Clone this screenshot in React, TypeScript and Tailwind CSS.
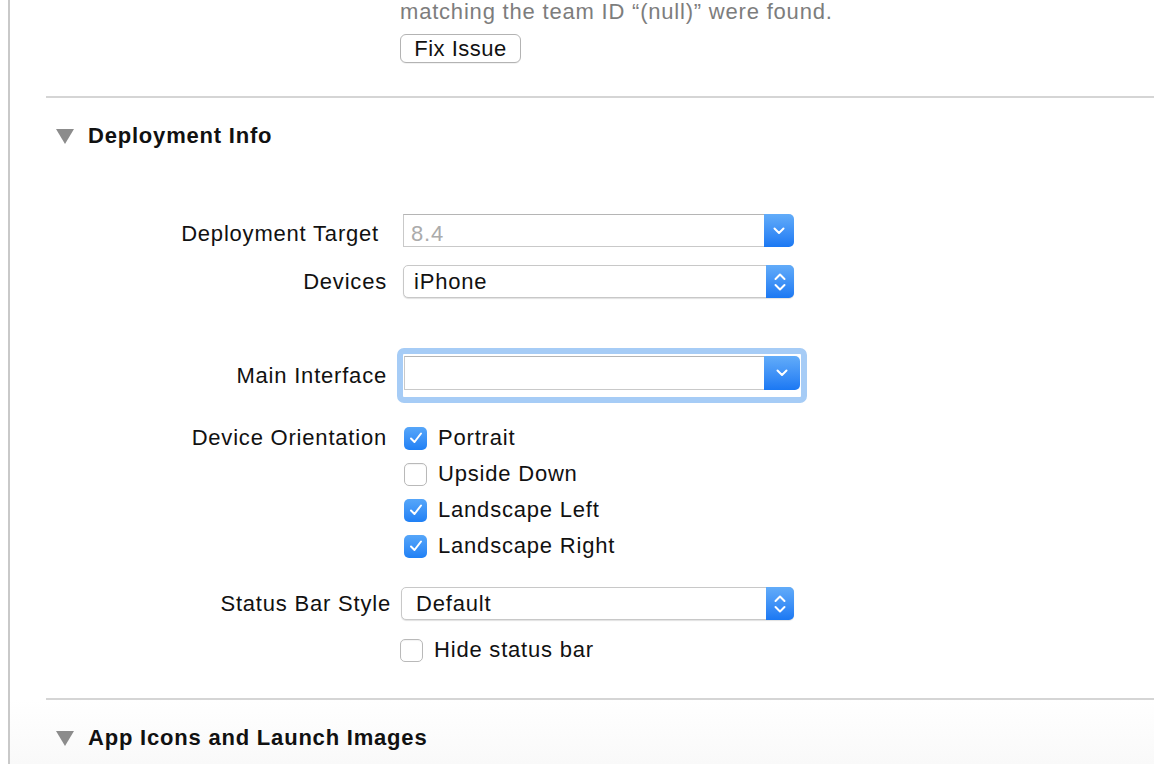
import React from "react";

const Tri = () => (
  <svg width="18" height="15" viewBox="0 0 18 15" className="shrink-0">
    <polygon points="0,0 18,0 9,15" fill="#8c8c8c" />
  </svg>
);

const ChevDown = () => (
  <svg width="12" height="8" viewBox="0 0 12 8">
    <polyline points="1.5,1.5 6,6 10.5,1.5" fill="none" stroke="white" strokeWidth="2" strokeLinecap="round" strokeLinejoin="round" />
  </svg>
);

const ChevUpDown = () => (
  <svg width="12" height="20" viewBox="0 0 12 20">
    <polyline points="1.5,7 6,2.5 10.5,7" fill="none" stroke="white" strokeWidth="2" strokeLinecap="round" strokeLinejoin="round" />
    <polyline points="1.5,13 6,17.5 10.5,13" fill="none" stroke="white" strokeWidth="2" strokeLinecap="round" strokeLinejoin="round" />
  </svg>
);

const Combo = ({ text, gray }: { text: string; gray?: boolean }) => (
  <div className="flex h-[33px] w-[391px] items-stretch">
    <div className="flex flex-1 items-center border border-r-0 border-[#c9c9c9] border-t-[#b5b5b5] bg-white pl-[7px] pt-[6px]">
      <span className={gray ? "text-[#ababab]" : "text-[#111]"}>{text}</span>
    </div>
    <div className="flex w-[30px] items-center justify-center rounded-r-[5px] bg-gradient-to-b from-[#62acf9] to-[#1a78f3]">
      <ChevDown />
    </div>
  </div>
);

const Popup = ({ text, w, pl }: { text: string; w: string; pl: string }) => (
  <div className={`flex h-[33px] ${w} items-stretch rounded-[5px] border border-[#c8c8c8] bg-white shadow-[0_1px_1px_rgba(0,0,0,0.12)]`}>
    <div className={`flex flex-1 items-center ${pl}`}>
      <span className="text-[#111]">{text}</span>
    </div>
    <div className="-my-px -mr-px flex w-[28px] items-center justify-center rounded-r-[5px] bg-gradient-to-b from-[#62acf9] to-[#1a78f3]">
      <ChevUpDown />
    </div>
  </div>
);

const Check = ({ on }: { on?: boolean }) =>
  on ? (
    <div className="flex h-[23px] w-[23px] items-center justify-center rounded-[5px] bg-gradient-to-b from-[#56a6f9] to-[#1f80f5]">
      <svg width="14" height="12" viewBox="0 0 14 12">
        <polyline points="2,6.5 5.5,10 12,1.5" fill="none" stroke="white" strokeWidth="2" strokeLinecap="round" strokeLinejoin="round" />
      </svg>
    </div>
  ) : (
    <div className="h-[23px] w-[23px] rounded-[5px] border border-[#b9b9b9] bg-white shadow-[inset_0_1px_1px_rgba(0,0,0,0.05)]" />
  );

export default function App() {
  return (
    <div
      className="relative flex h-[764px] w-[1154px] overflow-hidden bg-white text-[22px] tracking-[0.8px] text-[#111]"
      style={{ fontFamily: '"Liberation Sans", Arial, sans-serif' }}
    >
      <div className="w-[8px] shrink-0" />
      <div className="w-[2px] shrink-0 bg-[#c9c9c9]" />
      <div className="flex flex-1 flex-col">
        {/* top error text */}
        <div className="ml-[390px] h-[23px] leading-[24px] whitespace-nowrap text-[#7d7d7d]">
          matching the team ID “(null)” were found.
        </div>
        <div className="ml-[390px] mt-[11px] flex h-[29px] w-[121px] items-center justify-center rounded-[6px] border border-[#b3b3b3] bg-white pt-[1px] leading-none tracking-[0.5px] shadow-[0_1px_0_rgba(0,0,0,0.05)]">
          Fix Issue
        </div>

        <div className="ml-[36px] mt-[33px] h-[2px] bg-[#d5d5d5]" />

        {/* Deployment Info header */}
        <div className="ml-[46px] mt-[26px] flex h-[24px] items-center gap-[14px]">
          <Tri />
          <span className="font-bold leading-[24px] tracking-[0.8px]">Deployment Info</span>
        </div>

        {/* Deployment Target */}
        <div className="mt-[66px] flex h-[33px] items-center">
          <div className="w-[377px] pr-[8px] pt-[7px] text-right leading-[24px]">Deployment Target</div>
          <div className="ml-[16px]">
            <Combo text="8.4" gray />
          </div>
        </div>

        {/* Devices */}
        <div className="mt-[18px] flex h-[33px] items-center">
          <div className="w-[377px] pt-[1px] text-right leading-[24px]">Devices</div>
          <div className="ml-[16px]">
            <Popup text="iPhone" w="w-[391px]" pl="pl-[10px]" />
          </div>
        </div>

        {/* Main Interface */}
        <div className="mt-[50px] flex h-[55px] items-center">
          <div className="w-[377px] pt-[1px] text-right leading-[24px]">Main Interface</div>
          <div className="ml-[10px] h-[55px] w-[410px] rounded-[7px] border-[6px] border-[#a6ccf6] bg-white pl-[1px] pt-[2px]">
            <div className="flex h-[34px] w-[396px] items-stretch">
              <div className="flex-1 border border-r-0 border-[#c9c9c9] border-t-[#b5b5b5] bg-white" />
              <div className="flex w-[36px] items-center justify-center rounded-r-[5px] bg-gradient-to-b from-[#62acf9] to-[#1a78f3]">
                <ChevDown />
              </div>
            </div>
          </div>
        </div>

        {/* Device Orientation */}
        <div className="mt-[17px] flex">
          <div className="flex h-[36px] w-[377px] items-center justify-end leading-[24px]">Device Orientation</div>
          <div className="ml-[17px] flex flex-col">
            {[
              ["Portrait", true],
              ["Upside Down", false],
              ["Landscape Left", true],
              ["Landscape Right", true],
            ].map(([t, on]) => (
              <div key={t as string} className="flex h-[36px] items-center gap-[11px]">
                <Check on={on as boolean} />
                <span className="leading-[24px]">{t as string}</span>
              </div>
            ))}
          </div>
        </div>

        {/* Status Bar Style */}
        <div className="mt-[23px] flex h-[33px] items-center">
          <div className="w-[381px] whitespace-nowrap text-right leading-[24px]">Status Bar Style</div>
          <div className="ml-[10px]">
            <Popup text="Default" w="w-[393px]" pl="pl-[14px]" />
          </div>
        </div>

        {/* Hide status bar */}
        <div className="ml-[390px] mt-[18px] flex h-[24px] items-center gap-[11px]">
          <Check />
          <span className="leading-[24px]">Hide status bar</span>
        </div>

        <div className="ml-[36px] mt-[36px] h-[2px] bg-[#d5d5d5]" />

        <div className="flex-1 bg-gradient-to-b from-white to-[#f9f9f9]">
          <div className="ml-[46px] mt-[26px] flex h-[24px] items-center gap-[14px]">
            <Tri />
            <span className="font-bold leading-[24px] tracking-[0.8px]">App Icons and Launch Images</span>
          </div>
        </div>
      </div>
    </div>
  );
}
